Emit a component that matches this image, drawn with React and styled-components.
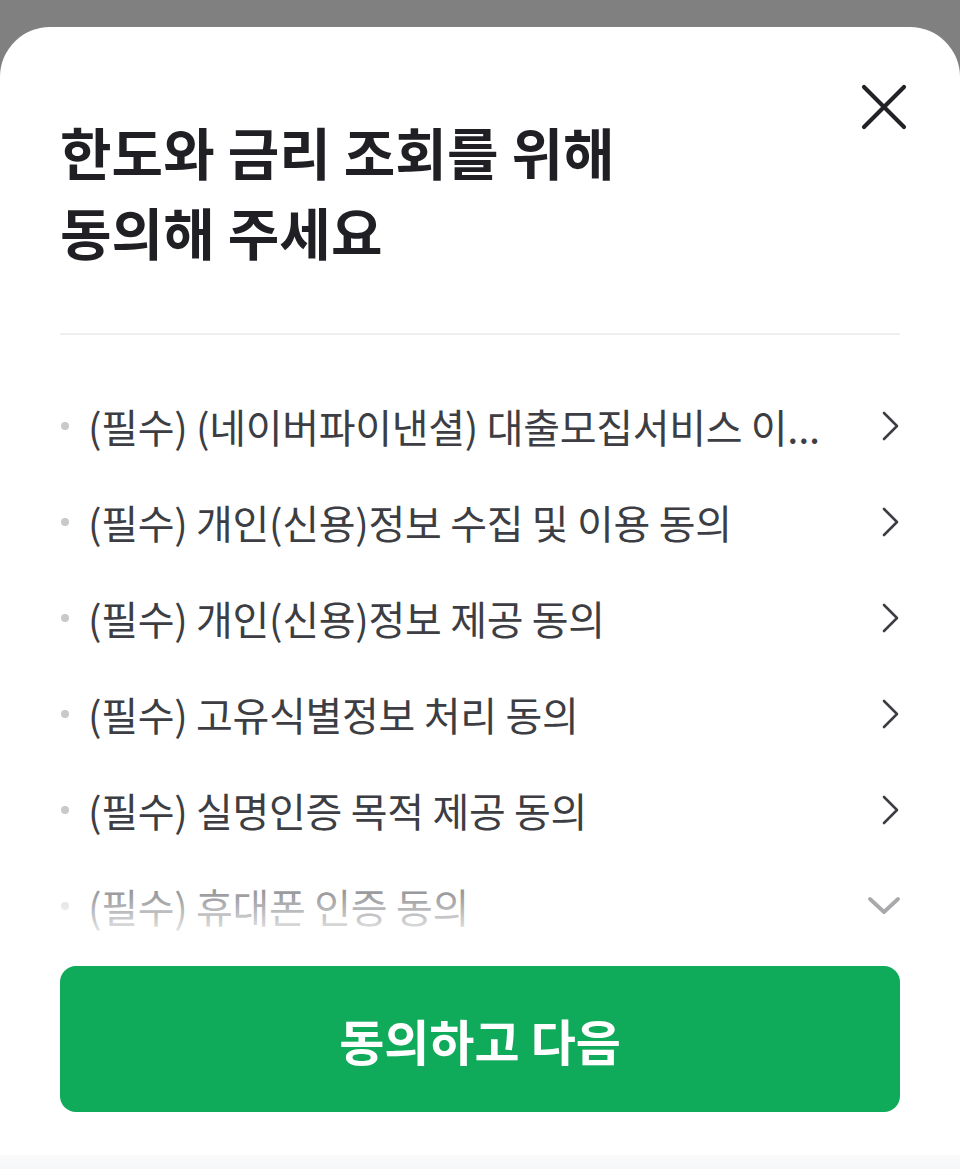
import React from 'react';
import styled, { createGlobalStyle } from 'styled-components';

const GlobalStyle = createGlobalStyle`
  html, body {
    margin: 0;
    padding: 0;
    background: #808080;
    font-family: 'Noto Sans CJK KR', 'Noto Sans', sans-serif;
  }
`;

const Page = styled.div`
  height: 1169px;
  padding-top: 27px;
  box-sizing: border-box;
  display: flex;
  flex-direction: column;
`;

const Sheet = styled.div`
  flex: 1;
  background: #ffffff;
  border-radius: 50px 50px 0 0;
  display: flex;
  flex-direction: column;
  overflow: hidden;
`;

const Header = styled.div`
  display: flex;
  justify-content: space-between;
  align-items: flex-start;
  padding: 84px 50px 0 60px;
`;

const Title = styled.h1`
  margin: 0;
  font-size: 56px;
  line-height: 80px;
  font-weight: 700;
  color: #1f1f24;
  letter-spacing: 0.1px;
`;

const CloseButton = styled.button`
  border: 0;
  background: none;
  padding: 0;
  margin-top: -30px;
  width: 52px;
  height: 52px;
  display: flex;
  align-items: center;
  justify-content: center;
  color: #222226;
`;

const Divider = styled.hr`
  margin: 62px 60px 0;
  border: 0;
  height: 2px;
  background: #eeefef;
`;

const List = styled.ul`
  list-style: none;
  margin: 0;
  padding: 0 60px;
  margin-top: 43px;
  position: relative;
`;

const Row = styled.li`
  display: flex;
  align-items: center;
  height: 96px;
`;

const Dot = styled.span`
  width: 8px;
  height: 8px;
  border-radius: 50%;
  background: #c9c9cb;
  margin-left: 1px;
  margin-right: 19px;
  flex: none;
`;

const Label = styled.span`
  flex: 1;
  min-width: 0;
  font-size: 40px;
  color: #3d3e44;
  white-space: nowrap;
  margin-right: 40px;
  letter-spacing: -0.3px;
`;

const Arrow = styled.span`
  flex: none;
  width: 32px;
  display: flex;
  justify-content: flex-end;
  color: ${p => p.$muted ? '#a9a9ac' : '#3d3e44'};
  position: relative;
  z-index: 2;
`;

const Fade = styled.div`
  position: absolute;
  left: 0;
  right: 0;
  bottom: 0;
  height: 96px;
  background: linear-gradient(to bottom, rgba(255,255,255,0.2) 0%, rgba(255,255,255,0.55) 45%, #ffffff 92%);
  pointer-events: none;
  z-index: 1;
`;

const Footer = styled.div`
  padding: 12px 60px 0;
`;

const NextButton = styled.button`
  width: 100%;
  height: 146px;
  border: 0;
  border-radius: 16px;
  background: #10aa5b;
  color: #ffffff;
  font-family: 'Noto Sans CJK KR', 'Noto Sans', sans-serif;
  font-size: 49px;
  font-weight: 700;
  letter-spacing: 0;
`;

const BottomStrip = styled.div`
  margin-top: auto;
  height: 14px;
  background: linear-gradient(to bottom, #fbfbfc, #f5f6f8);
`;

const CloseIcon = () => (
  <svg width="46" height="46" viewBox="0 0 46 46" fill="none">
    <path d="M3 3L43 43M43 3L3 43" stroke="currentColor" strokeWidth="4.2" strokeLinecap="round" />
  </svg>
);

const ChevronRight = () => (
  <svg width="18" height="30" viewBox="0 0 18 30" fill="none">
    <path d="M2 2L15 15L2 28" stroke="currentColor" strokeWidth="2.6" strokeLinecap="round" strokeLinejoin="round" />
  </svg>
);

const ChevronDown = () => (
  <svg width="32" height="20" viewBox="0 0 32 20" fill="none">
    <path d="M2 3L16 16L30 3" stroke="currentColor" strokeWidth="3.8" strokeLinecap="round" strokeLinejoin="round" />
  </svg>
);

const terms = [
  '(필수) (네이버파이낸셜) 대출모집서비스 이...',
  '(필수) 개인(신용)정보 수집 및 이용 동의',
  '(필수) 개인(신용)정보 제공 동의',
  '(필수) 고유식별정보 처리 동의',
  '(필수) 실명인증 목적 제공 동의',
];

export default function App() {
  return (
    <>
      <GlobalStyle />
      <Page>
        <Sheet>
          <Header>
            <Title>
              한도와 금리 조회를 위해
              <br />
              동의해 주세요
            </Title>
            <CloseButton aria-label="닫기">
              <CloseIcon />
            </CloseButton>
          </Header>
          <Divider />
          <List>
            {terms.map(t => (
              <Row key={t}>
                <Dot />
                <Label>{t}</Label>
                <Arrow><ChevronRight /></Arrow>
              </Row>
            ))}
            <Row>
              <Dot />
              <Label>(필수) 휴대폰 인증 동의</Label>
              <Arrow $muted><ChevronDown /></Arrow>
            </Row>
            <Fade />
          </List>
          <Footer>
            <NextButton>동의하고 다음</NextButton>
          </Footer>
          <BottomStrip />
        </Sheet>
      </Page>
    </>
  );
}
